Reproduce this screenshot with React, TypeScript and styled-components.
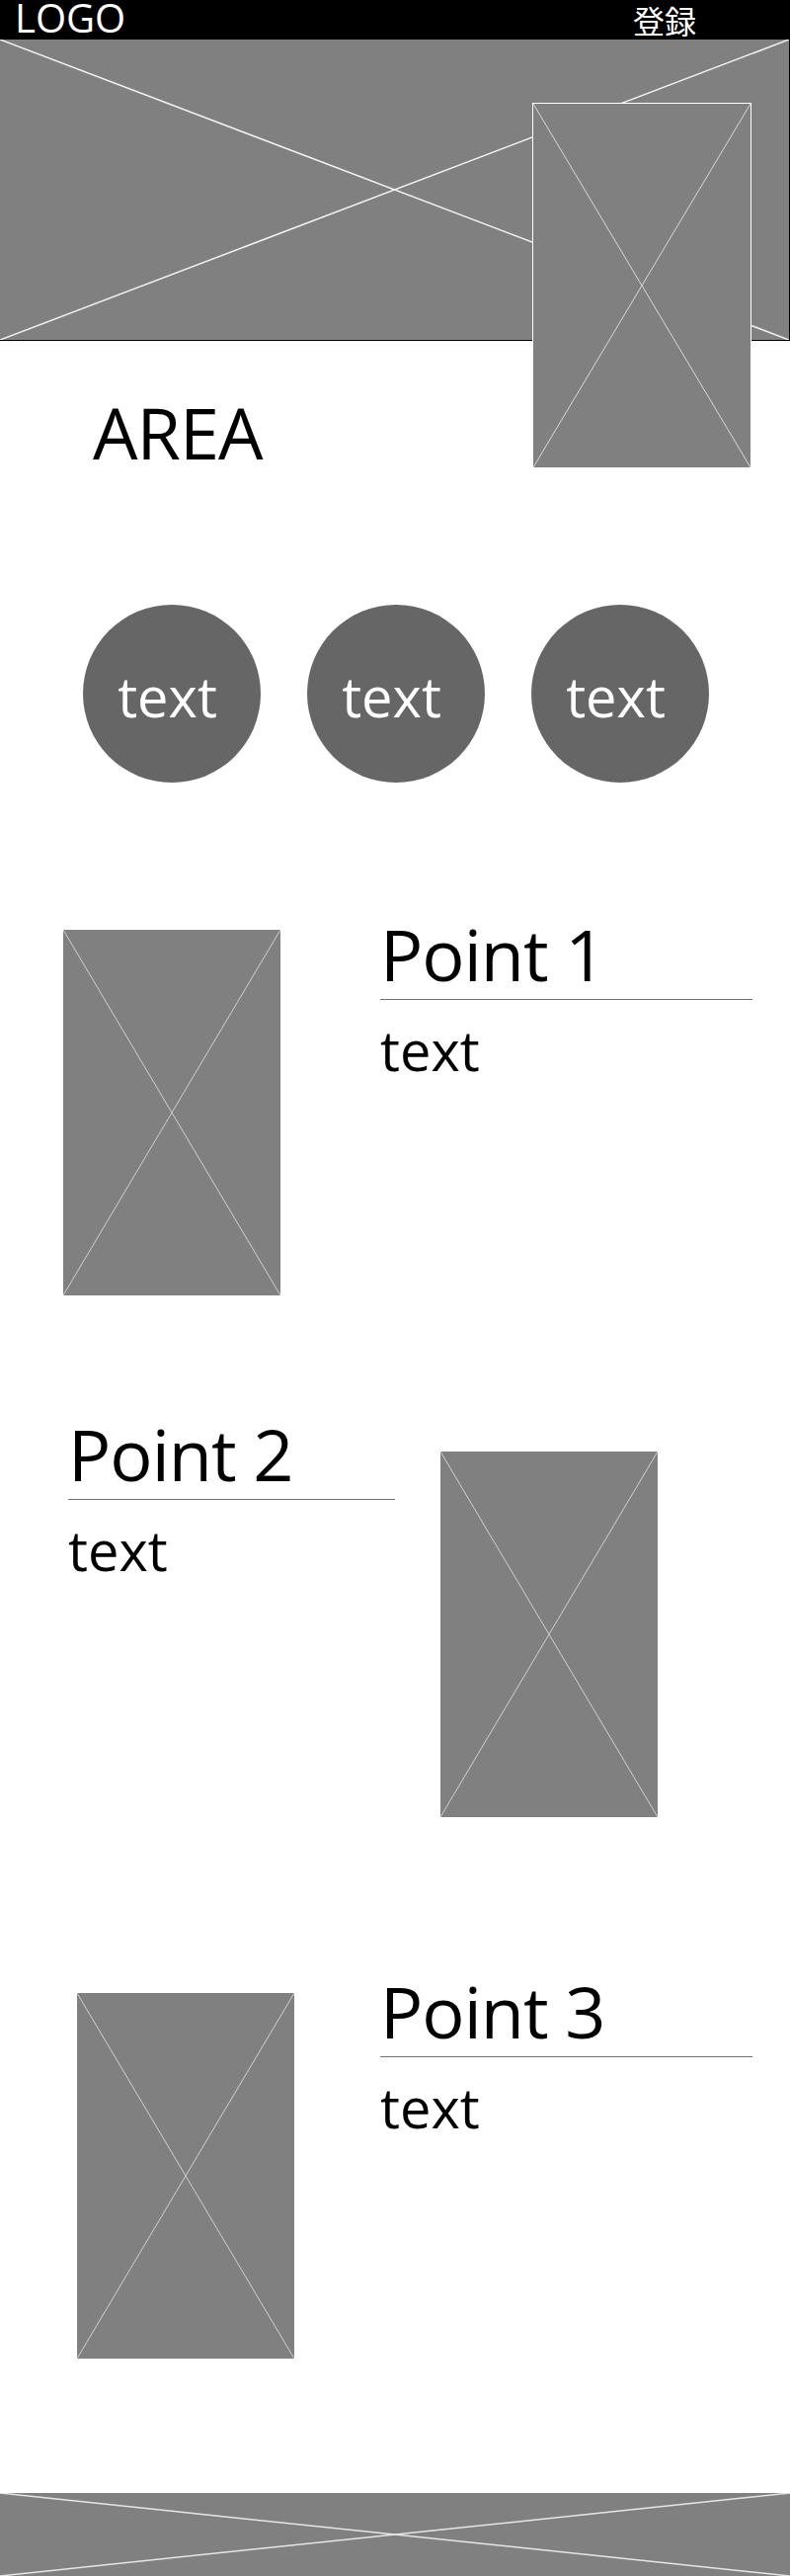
import styled, { createGlobalStyle } from "styled-components";

const GlobalStyle = createGlobalStyle`
  body {
    margin: 0;
    background: #fff;
    font-family: "Open Sans", "Noto Sans", "Noto Sans CJK JP", sans-serif;
    color: #000;
  }
`;

const Page = styled.div`
  width: 800px;
  display: flex;
  flex-direction: column;
`;

const Header = styled.header`
  height: 40px;
  background: #000;
  color: #fff;
  display: flex;
  justify-content: space-between;
  align-items: flex-start;
  padding: 0 95px 0 15px;
  box-sizing: border-box;
`;

const Logo = styled.div`
  font-size: 40px;
  line-height: 36px;
`;

const NavLink = styled.a`
  font-family: "Noto Sans CJK JP", "Open Sans", sans-serif;
  font-size: 32px;
  line-height: 40px;
  color: #fff;
  text-decoration: none;
`;

const HeroWrap = styled.div`
  position: relative;
`;

const PlaceholderBox = styled.div<{ $w?: number; $h: number }>`
  position: relative;
  width: ${(p) => (p.$w ? `${p.$w}px` : "100%")};
  height: ${(p) => p.$h}px;
  background: #808080;
  box-sizing: border-box;
  flex-shrink: 0;

  svg {
    position: absolute;
    inset: 0;
    width: 100%;
    height: 100%;
    display: block;
  }
`;

const Hero = styled(PlaceholderBox)`
  border-bottom: 1px solid #000;
  border-right: 1px solid #000;
`;

const SideShot = styled(PlaceholderBox)`
  position: absolute;
  top: 64px;
  left: 539px;
  border: 1px solid #fff;
`;

const AreaSection = styled.section`
  padding: 56px 0 0 94px;
`;

const AreaTitle = styled.h1`
  margin: 0;
  font-weight: 400;
  font-size: 72px;
  line-height: 72px;
  letter-spacing: -1px;
`;

const CircleRow = styled.div`
  display: flex;
  gap: 47px;
  padding-left: 84px;
  margin-top: 139px;
`;

const Circle = styled.div`
  width: 180px;
  height: 180px;
  border-radius: 50%;
  background: #666;
  color: #fff;
  font-size: 56px;
  display: flex;
  align-items: center;
  justify-content: center;
  padding: 4px 9px 0 0;
  box-sizing: border-box;
`;

const PointRow = styled.section<{ $top: number; $pad: number; $gap: number }>`
  display: flex;
  align-items: flex-start;
  margin-top: ${(p) => p.$top}px;
  padding-left: ${(p) => p.$pad}px;
  gap: ${(p) => p.$gap}px;
`;

const ShotSlot = styled.div<{ $offset: number }>`
  margin-top: ${(p) => p.$offset}px;
`;

const TextCol = styled.div<{ $w: number }>`
  width: ${(p) => p.$w}px;
  display: flex;
  flex-direction: column;
`;

const PointTitle = styled.h2`
  margin: 0;
  font-weight: 400;
  font-size: 72px;
  line-height: 70px;
  letter-spacing: -1px;
  padding-bottom: 11px;
  border-bottom: 1px solid #707070;
`;

const PointText = styled.p`
  margin: 22px 0 0;
  font-size: 56px;
  line-height: 56px;
`;

const Footer = styled(PlaceholderBox)`
  margin-top: 136px;
`;

function Cross({ color, width }: { color: string; width: number }) {
  return (
    <svg viewBox="0 0 100 100" preserveAspectRatio="none">
      <line x1="0" y1="0" x2="100" y2="100" stroke={color} strokeWidth={width} vectorEffect="non-scaling-stroke" />
      <line x1="0" y1="100" x2="100" y2="0" stroke={color} strokeWidth={width} vectorEffect="non-scaling-stroke" />
    </svg>
  );
}

function Shot({ offset }: { offset: number }) {
  return (
    <ShotSlot $offset={offset}>
      <PlaceholderBox $w={220} $h={370}>
        <Cross color="#d0d0d0" width={1} />
      </PlaceholderBox>
    </ShotSlot>
  );
}

function PointCopy({ title, width }: { title: string; width: number }) {
  return (
    <TextCol $w={width}>
      <PointTitle>{title}</PointTitle>
      <PointText>text</PointText>
    </TextCol>
  );
}

export default function App() {
  return (
    <Page>
      <GlobalStyle />
      <Header>
        <Logo>LOGO</Logo>
        <NavLink href="#">登録</NavLink>
      </Header>

      <HeroWrap>
        <Hero $h={305}>
          <Cross color="#f2f2f2" width={1.5} />
        </Hero>
        <SideShot $w={222} $h={370}>
          <Cross color="#d8d8d8" width={1} />
        </SideShot>
      </HeroWrap>

      <AreaSection>
        <AreaTitle>AREA</AreaTitle>
      </AreaSection>

      <CircleRow>
        <Circle>text</Circle>
        <Circle>text</Circle>
        <Circle>text</Circle>
      </CircleRow>

      <PointRow $top={138} $pad={64} $gap={101}>
        <Shot offset={11} />
        <PointCopy title="Point 1" width={377} />
      </PointRow>

      <PointRow $top={125} $pad={69} $gap={46}>
        <PointCopy title="Point 2" width={331} />
        <Shot offset={33} />
      </PointRow>

      <PointRow $top={161} $pad={78} $gap={87}>
        <Shot offset={17} />
        <PointCopy title="Point 3" width={377} />
      </PointRow>

      <Footer $h={84}>
        <Cross color="#e6e6e6" width={1.5} />
      </Footer>
    </Page>
  );
}
